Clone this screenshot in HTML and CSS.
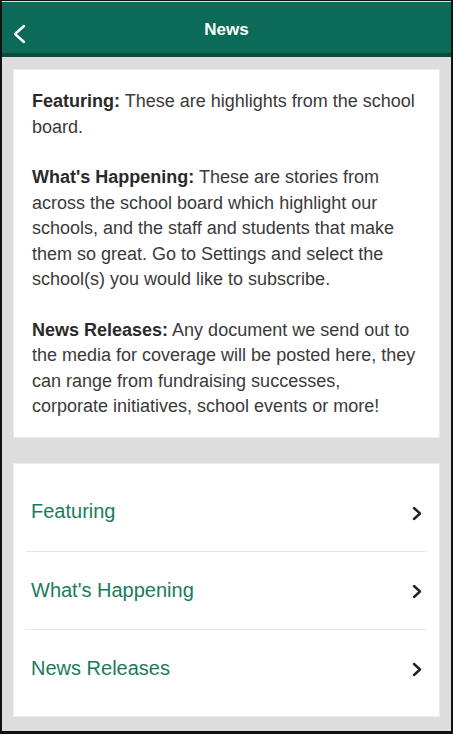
FILE: index.html
```html
<!DOCTYPE html>
<html lang="en">
<head>
    <meta charset="UTF-8">
    <meta name="viewport" content="width=device-width, initial-scale=1.0">
    <title>News</title>
    <link rel="stylesheet" href="styles.css">
</head>
<body>
    <div class="screen">
        <header class="top-bar">
            <button class="back-btn" aria-label="Back">
                <svg width="14" height="20" viewBox="0 0 14 20">
                    <polyline points="12,2 3,10 12,18" fill="none" stroke="#fff" stroke-width="2.4" stroke-linecap="round" stroke-linejoin="round"/>
                </svg>
            </button>
            <h1 class="title">News</h1>
        </header>

        <main class="content">
            <section class="card intro">
                <p><strong>Featuring:</strong> These are highlights from the school board.</p>
                <p><strong>What's Happening:</strong> These are stories from across the school board which highlight our schools, and the staff and students that make them so great. Go to Settings and select the school(s) you would like to subscribe.</p>
                <p><strong>News Releases:</strong> Any document we send out to the media for coverage will be posted here, they can range from fundraising successes, corporate initiatives, school events or more!</p>
            </section>

            <nav class="card menu">
                <a class="menu-item" href="#">
                    <span>Featuring</span>
                    <svg class="chevron" width="10" height="15" viewBox="0 0 10 15">
                        <polyline points="2,2 8,7.5 2,13" fill="none" stroke="#222" stroke-width="2.4" stroke-linecap="round" stroke-linejoin="round"/>
                    </svg>
                </a>
                <a class="menu-item" href="#">
                    <span>What's Happening</span>
                    <svg class="chevron" width="10" height="15" viewBox="0 0 10 15">
                        <polyline points="2,2 8,7.5 2,13" fill="none" stroke="#222" stroke-width="2.4" stroke-linecap="round" stroke-linejoin="round"/>
                    </svg>
                </a>
                <a class="menu-item" href="#">
                    <span>News Releases</span>
                    <svg class="chevron" width="10" height="15" viewBox="0 0 10 15">
                        <polyline points="2,2 8,7.5 2,13" fill="none" stroke="#222" stroke-width="2.4" stroke-linecap="round" stroke-linejoin="round"/>
                    </svg>
                </a>
            </nav>
        </main>
    </div>
</body>
</html>
```

FILE: styles.css
```css
* {
    box-sizing: border-box;
}

body {
    margin: 0;
    font-family: 'Liberation Sans', Arial, sans-serif;
    background-color: #000;
}

.screen {
    width: 453px;
    height: 734px;
    border: 2px solid #111;
    border-top-width: 1px;
    border-bottom-width: 3px;
    background-color: #dddddd;
    display: flex;
    flex-direction: column;
    overflow: hidden;
}

.top-bar {
    position: relative;
    height: 56px;
    padding-top: 5px;
    background-color: #0c6b58;
    border-top: 1px solid #d8e2df;
    border-bottom: 4px solid #0a4b3e;
    display: flex;
    align-items: center;
    justify-content: center;
    flex-shrink: 0;
}

.back-btn {
    position: absolute;
    left: 10px;
    top: 22px;
    padding: 0;
    border: none;
    background: none;
    cursor: pointer;
}

.title {
    margin: 0;
    color: #fff;
    font-size: 17px;
    font-weight: bold;
}

.content {
    padding: 12px 11px;
    display: flex;
    flex-direction: column;
    gap: 25px;
}

.card {
    background-color: #fff;
    border: 1px solid #ebebeb;
}

.intro {
    padding: 19px 18px 17px 18px;
    color: #3a3a3a;
    font-size: 18px;
    line-height: 25.5px;
}

.intro p {
    margin: 0 0 25px 0;
}

.intro p:last-child {
    margin-bottom: 0;
}

.intro strong {
    color: #2a2a2a;
}

.menu {
    padding: 9px 12px;
}

.menu-item {
    display: flex;
    align-items: center;
    justify-content: space-between;
    height: 78px;
    padding: 0 5px 0 5px;
    color: #1a7a60;
    font-size: 20px;
    text-decoration: none;
    border-top: 1px solid #e6e6e6;
}

.menu-item:first-child {
    border-top: none;
}

.chevron {
    margin-top: 3px;
}
```
